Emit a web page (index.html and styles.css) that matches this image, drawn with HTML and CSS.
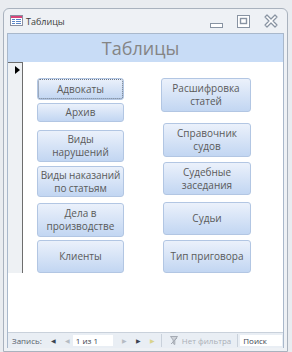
FILE: index.html
```html
<!DOCTYPE html>
<html lang="ru">

<head>
    <meta charset="UTF-8">
    <meta name="viewport" content="width=device-width, initial-scale=1.0">
    <title>Таблицы</title>
    <link rel="stylesheet" href="styles.css">
</head>

<body>
    <div class="window">
        <div class="titlebar">
            <svg class="form-icon" width="13" height="11" viewBox="0 0 13 11">
                <rect x="0.5" y="0.5" width="12" height="10" fill="#fff" stroke="#8a8fa0"/>
                <rect x="1" y="1" width="11" height="2" fill="#d8457a"/>
                <rect x="2" y="4" width="3" height="1" fill="#5b86c8"/>
                <rect x="6" y="4" width="5" height="1" fill="#5b86c8"/>
                <rect x="2" y="6" width="3" height="1" fill="#5b86c8"/>
                <rect x="6" y="6" width="5" height="1" fill="#5b86c8"/>
                <rect x="2" y="8" width="3" height="1" fill="#5b86c8"/>
                <rect x="6" y="8" width="5" height="1" fill="#5b86c8"/>
            </svg>
            <span class="title">Таблицы</span>
            <div class="controls">
                <svg width="13" height="6" viewBox="0 0 13 6">
                    <rect x="0.5" y="0.5" width="12" height="4" fill="#fff" stroke="#8893a2"/>
                </svg>
                <svg width="13" height="13" viewBox="0 0 13 13">
                    <rect x="0.5" y="0.5" width="12" height="12" fill="#fff" stroke="#8893a2"/>
                    <rect x="3.5" y="3.5" width="6" height="5" fill="none" stroke="#8893a2" stroke-width="1.4"/>
                </svg>
                <svg width="14" height="14" viewBox="0 0 14 14">
                    <path d="M1 3 L3 1 L7 5 L11 1 L13 3 L9 7 L13 11 L11 13 L7 9 L3 13 L1 11 L5 7 Z" fill="#fff" stroke="#8893a2" stroke-width="1.2" stroke-linejoin="round"/>
                </svg>
            </div>
        </div>

        <div class="frame">
            <div class="form-header">Таблицы</div>

            <div class="form-body">
                <div class="detail">
                    <div class="selector"><span class="arrow"></span></div>

                    <div class="col">
                        <button class="btn h22 focus">Адвокаты</button>
                        <button class="btn h19 mt3">Архив</button>
                        <button class="btn h32 mt8">Виды<br>нарушений</button>
                        <button class="btn h31 mt4 tight">Виды наказаний<br>по статьям</button>
                        <button class="btn h34 mt6">Дела в<br>производстве</button>
                        <button class="btn h33 mt3">Клиенты</button>
                    </div>

                    <div class="col right">
                        <button class="btn h34 shifted">Расшифровка<br>статей</button>
                        <button class="btn h34 mt11">Справочник<br>судов</button>
                        <button class="btn h33 mt5">Судебные<br>заседания</button>
                        <button class="btn h33 mt7">Судьи</button>
                        <button class="btn h33 mt5">Тип приговора</button>
                    </div>
                </div>
            </div>

            <div class="navbar">
                <span class="nav-label">Запись:</span>
                <span class="nav-btn dark">&#9664;&#xFE0E;</span>
                <span class="nav-btn">&#9664;&#xFE0E;</span>
                <span class="nav-box">1 из 1</span>
                <span class="nav-btn">&#9654;&#xFE0E;</span>
                <span class="nav-btn dark">&#9654;&#xFE0E;</span>
                <span class="nav-btn new">&#9654;&#xFE0E;</span>
                <span class="sep"></span>
                <svg class="filter-icon" width="8" height="9" viewBox="0 0 8 9">
                    <path d="M0.5 0.5 H7.5 L4.8 4 V8.5 L3.2 7.5 V4 Z" fill="#d0d4da" stroke="#a4aab3"/>
                    <path d="M1 8 L7 2" stroke="#a4aab3"/>
                </svg>
                <span class="nav-filter">Нет фильтра</span>
                <span class="sep"></span>
                <span class="nav-search">Поиск</span>
            </div>
        </div>
    </div>
</body>

</html>
```

FILE: styles.css
```css
body {
    margin: 0;
    background-color: #e9ecf0;
    font-family: "Open Sans", Arial, sans-serif;
}

.window {
    box-sizing: border-box;
    width: 285px;
    margin: 8px 0 0 3px;
    padding: 0 3px 3px 3px;
    border: 1px solid #a9b2be;
    border-radius: 6px 6px 0 0;
    background-color: #eef1f5;
}

.titlebar {
    height: 24px;
    display: flex;
    align-items: center;
}

.form-icon {
    margin-left: 3px;
    margin-top: -2px;
}

.title {
    margin-left: 3px;
    font-size: 9px;
    color: #3c3c3c;
}

.controls {
    margin-left: auto;
    margin-right: 6px;
    display: flex;
    align-items: center;
    gap: 14px;
}

.controls svg:first-child {
    margin-top: 9px;
}

.frame {
    border: 1px solid #a9b8cb;
    border-bottom: none;
    background-color: #fff;
}

.form-header {
    height: 28px;
    background-color: #c8dcf6;
    color: #858585;
    font-size: 18px;
    line-height: 28px;
    text-align: center;
    padding-right: 10px;
}

.form-body {
    height: 270px;
}

.detail {
    display: flex;
}

.selector {
    width: 14px;
    height: 210px;
    background-color: #eef1f4;
    border-top: 1px solid #6d6d6d;
    border-right: 1px solid #6d6d6d;
    position: relative;
}

.arrow {
    position: absolute;
    left: 7px;
    top: 3px;
    border-top: 4px solid transparent;
    border-bottom: 4px solid transparent;
    border-left: 5px solid #000;
}

.col {
    display: flex;
    flex-direction: column;
    width: 87px;
    margin-left: 14px;
    padding-top: 16px;
}

.col.right {
    width: 88px;
    margin-left: 39px;
}

.btn {
    box-sizing: border-box;
    margin: 0;
    padding: 0;
    border: 1px solid #b2c6e3;
    border-radius: 3px;
    background: linear-gradient(#ebf1fb, #c2d6f2);
    color: #5a5a5a;
    font-family: "Open Sans", Arial, sans-serif;
    font-size: 10px;
    line-height: 13px;
    text-align: center;
    white-space: nowrap;
}

.btn.focus {
    outline: 1px dotted #6a7584;
    outline-offset: -2px;
}

.btn.tight {
    letter-spacing: -0.1px;
}

.btn.shifted {
    margin-left: -2px;
}

.h19 { height: 19px; }
.h22 { height: 22px; }
.h31 { height: 31px; }
.h32 { height: 32px; }
.h33 { height: 33px; }
.h34 { height: 34px; }

.mt3 { margin-top: 3px; }
.mt4 { margin-top: 4px; }
.mt5 { margin-top: 5px; }
.mt6 { margin-top: 6px; }
.mt7 { margin-top: 7px; }
.mt8 { margin-top: 8px; }
.mt11 { margin-top: 11px; }

.navbar {
    height: 15px;
    display: flex;
    align-items: center;
    background-color: #e9eef4;
    border-top: 1px solid #c9d1db;
    font-size: 8px;
    color: #9aa0a8;
}

.nav-label {
    margin-left: 4px;
    color: #56606c;
}

.nav-btn {
    font-size: 6px;
    margin-left: 9px;
    color: #b5bbc3;
}

.nav-btn.dark {
    color: #3c4450;
}

.nav-btn.new {
    color: #d9d48c;
}

.nav-box {
    width: 40px;
    height: 11px;
    margin-left: 3px;
    padding-left: 3px;
    box-sizing: border-box;
    background-color: #fff;
    color: #3c4450;
    line-height: 11px;
}

.sep {
    width: 1px;
    height: 13px;
    margin-left: 6px;
    background-color: #c9d1db;
}

.filter-icon {
    margin-left: 8px;
}

.nav-filter {
    margin-left: 4px;
    color: #a9afb7;
}

.nav-search {
    flex: 1;
    height: 11px;
    margin: 0 1px 0 2px;
    padding-left: 3px;
    background-color: #fff;
    color: #3c4450;
    line-height: 11px;
}
```
